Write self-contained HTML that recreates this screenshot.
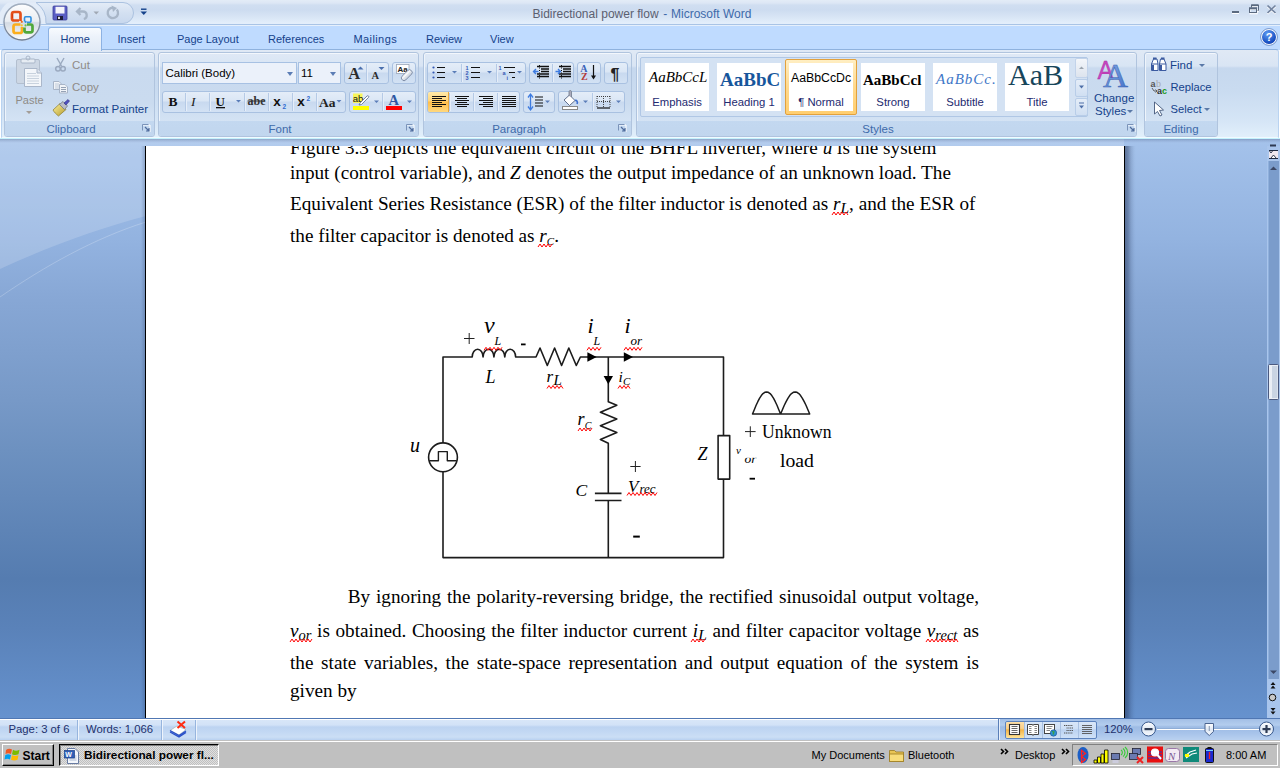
<!DOCTYPE html>
<html><head><meta charset="utf-8">
<style>
*{margin:0;padding:0;box-sizing:border-box}
html,body{width:1280px;height:768px;overflow:hidden;background:#fff}
body{position:relative;font-family:"Liberation Sans",sans-serif;font-size:11px;color:#15428b}
.a{position:absolute}
.t{position:absolute;white-space:pre;line-height:1}
#doc{left:0;top:139px;width:1280px;height:579px;background:linear-gradient(#a3c0e8 0,#6590cb 100%)}
#page{left:145px;top:146px;width:980px;height:572px;background:#fff;border-left:1px solid #000;border-right:1px solid #000;overflow:hidden}
#status{left:0;top:718px;width:1280px;height:22px;background:linear-gradient(#e1ecfa 0,#d3e3f7 9px,#c3d8f2 10px,#cfe1f7 21px);border-top:1px solid #5a84c0}
#taskbar{left:0;top:740px;width:1280px;height:28px;background:#c0c0c0;border-top:1px solid #dfdfdf}
.ln{position:absolute;white-space:nowrap;line-height:19.2px;height:20px;text-align:justify;text-align-last:justify}
.nj{text-align:left;text-align-last:left}
.sb{font-size:15.5px;position:relative;top:3px}
.tab{top:33.5px;font-size:11px;color:#15428b}
.ser{font-family:"Liberation Serif",serif;color:#000;font-size:19.2px}
.i{font-style:italic}
.grp{position:absolute;top:52px;height:85px;border:1px solid #b0c4de;box-shadow:inset 0 1px 0 #f3f7fc,inset 1px 0 0 #eef4fb;border-radius:3px;background:linear-gradient(#dfe9f6 0,#d8e5f4 13px,#c9daef 15px,#cadbef 50px,#d4e3f4 68px);overflow:hidden}
.grp .lab{position:absolute;left:0;right:17px;bottom:0;height:16px;background:transparent;text-align:center;color:#3e6aaa;font-size:11.5px;line-height:18.5px}
.grp:before{content:"";position:absolute;left:0;right:0;bottom:0;height:15px;background:linear-gradient(#c3d8f0,#c1d6ee)}
.dl{position:absolute;width:8px;height:8px}
.btg{position:absolute;border:1px solid #a9c1e1;border-radius:3px;background:linear-gradient(#e4edf8 0,#dae6f5 45%,#c8d9ef 50%,#d3e2f4 100%)}
.sep{position:absolute;top:1px;bottom:1px;width:1px;background:#b5cae6;box-shadow:1px 0 0 #e6eef9}
.combo{position:absolute;border:1px solid #a7c1e3;background:#ebf1fa}
.rt{position:absolute;white-space:pre;line-height:1;font-size:11px;color:#15428b}
.gr{color:#8f8b87}
.arr{position:absolute;width:0;height:0;border-left:3px solid transparent;border-right:3px solid transparent;border-top:3px solid #5a79a8}
.tile{position:absolute;top:63px;width:64px;height:48px;background:#fff;text-align:center;overflow:hidden}
.tile .nm{position:absolute;left:0;right:0;top:33.5px;font-size:11.3px;color:#242a70;line-height:1;white-space:pre}
.tile .pv{position:absolute;left:2px;top:8px;white-space:pre;line-height:1}
</style></head><body>
<div class="a" style="left:0;top:0;width:1280px;height:25px;background:linear-gradient(#e3ecf7 0,#dde7f5 3px,#d0def1 5px,#cddcf0 10px,#d8e5f5 17px,#e3eefb 23px)"></div>
<div class="a" style="left:0;top:24px;width:1280px;height:1px;background:#a9c4e6"></div>
<div class="a" style="left:0;top:25px;width:1280px;height:1px;background:#e6f0fc"></div>
<div class="a" style="left:0;top:26px;width:1280px;height:24px;background:#bfdbff"></div>
<div class="a" style="left:1px;top:49px;width:1278px;height:90px;border:1px solid #b9d3f1;border-top-color:#8fb2de;border-radius:3px;background:linear-gradient(#e0e9f5 0,#d9e5f4 16px,#c6d8ee 18px,#c9dbf0 40px,#d5e5f6 70px,#e2f0fb 88px)"></div>
<div class="a" style="left:2px;top:137px;width:1276px;height:1px;background:#f2faff"></div><div class="a" style="left:0;top:138px;width:1280px;height:1px;background:#c4f2fc"></div>
<div class="a" style="left:48px;top:27px;width:54px;height:24px;border:1px solid #8db2e3;border-bottom:none;border-radius:3px 3px 0 0;background:linear-gradient(#f8fbfe,#ecf2fa 40%,#e1eaf6)"></div>
<div class="t tab" style="left:60.5px">Home</div>
<div class="t tab" style="left:117.5px">Insert</div>
<div class="t tab" style="left:177px">Page Layout</div>
<div class="t tab" style="left:268px">References</div>
<div class="t tab" style="left:353.5px;letter-spacing:0.4px">Mailings</div>
<div class="t tab" style="left:426px">Review</div>
<div class="t tab" style="left:490px">View</div>

<svg class="a" style="left:0;top:0" width="160" height="48" viewBox="0 0 160 48">
<defs>
<linearGradient id="obt" x1="0" y1="0" x2="0" y2="1"><stop offset="0" stop-color="#fdfdfe"/><stop offset="0.48" stop-color="#e9edf2"/><stop offset="0.52" stop-color="#d3dae3"/><stop offset="1" stop-color="#fbfcfd"/></linearGradient>
<linearGradient id="obb" x1="0" y1="0" x2="0" y2="1"><stop offset="0" stop-color="#a3afbf"/><stop offset="1" stop-color="#6f7d92"/></linearGradient>
</defs>
<linearGradient id="qat" x1="0" y1="0" x2="0" y2="1"><stop offset="0" stop-color="#e4ecf7"/><stop offset="0.5" stop-color="#d3e0f1"/><stop offset="1" stop-color="#c8d8ee"/></linearGradient>
<clipPath id="qband"><rect x="0" y="2.5" width="60" height="21"/></clipPath>
<circle cx="22" cy="22" r="24" fill="#e3ecf8" clip-path="url(#qband)"/>
<path d="M36,2.5 H123 A10.5,10.5 0 0 1 123,23.5 H46 A24,24 0 0 0 36,2.5 Z" fill="url(#qat)" stroke="#abc2e0" stroke-width="1"/>
<circle cx="22" cy="22.5" r="19.5" fill="#c9dcf3" opacity="0.5"/>
<circle cx="22" cy="22" r="18" fill="url(#obt)" stroke="url(#obb)" stroke-width="1.3"/>
<path d="M20.5,21 V14 Q20.5,12 18.5,12 H14 Q12,12 12,14 V18.5 Q12,20.5 14,20.5 H19" fill="none" stroke="#e4501a" stroke-width="2.7"/>
<path d="M12.5,14 V18" stroke="#c8300a" stroke-width="1" opacity="0.6"/>
<path d="M24.5,21.5 V18 Q24.5,16.8 25.7,16.8 H29.8 Q31,16.8 31,18 V21 Q31,22.2 29.8,22.2 H27" fill="none" stroke="#2f8fe0" stroke-width="1.6"/>
<path d="M20.5,24.5 H15.5 Q13.5,24.5 13.5,26.5 V31 Q13.5,33 15.5,33 H20 Q22,33 22,31 V27" fill="none" stroke="#fbae1e" stroke-width="2.7"/>
<path d="M24.5,27.5 V30.5 Q24.5,32.3 26.3,32.3 H30.7 Q32.5,32.3 32.5,30.5 V26.3 Q32.5,24.5 30.7,24.5 H27" fill="none" stroke="#50a83a" stroke-width="2.7"/>
<circle cx="21.8" cy="21.8" r="1.1" fill="#ef6b1a"/>
<circle cx="25.6" cy="21.8" r="1.1" fill="#2f8fe0"/>
<circle cx="21.8" cy="25.4" r="1.1" fill="#fbc52e"/>
<circle cx="25.6" cy="25.4" r="1.1" fill="#6cc04a"/>
<rect x="53" y="6" width="14" height="14" rx="1" fill="#5a5ec4" stroke="#3b3f9a" stroke-width="0.8"/>
<rect x="55.5" y="6.8" width="9" height="6.7" fill="#f4f4fb"/>
<rect x="57" y="16" width="6" height="4" fill="#1e1e3a"/>
<rect x="58" y="16.8" width="2" height="2.2" fill="#ddd"/>
<path d="M80.5,8 L77,11.5 L80.5,15 M77.5,11.5 H83 a3.8,3.8 0 0 1 0.8,7.5" fill="none" stroke="#a8b6c8" stroke-width="2.3"/>
<path d="M93.5,11.5 H99 L96.25,14.5 Z" fill="#a0a8b4"/>
<path d="M116.8,9.5 a5.2,5.2 0 1 1 -3.8,-1.8" fill="none" stroke="#a8b6c8" stroke-width="2.4"/>
<path d="M111.5,5.5 L117,8 L113,12 Z" fill="#a8b6c8"/>
<rect x="141" y="8.5" width="5.5" height="1.4" fill="#15428b"/>
<path d="M140.5,11.5 H147 L143.75,15 Z" fill="#15428b"/>
</svg>
<div class="t" style="left:532.5px;top:8.3px;font-size:12px;color:#5b6070">Bidirectional power flow</div><div class="t" style="left:663.3px;top:8.3px;font-size:12px;color:#3e6aaa">-</div><div class="t" style="left:671px;top:8.3px;font-size:12px;color:#3e6aaa">Microsoft Word</div>
<svg class="a" style="left:1225px;top:0" width="55" height="22" viewBox="1225 0 55 22">
<rect x="1232" y="12" width="7" height="2" fill="#fff"/>
<rect x="1232" y="11" width="7" height="2" fill="#5b6a80"/>
<path d="M1251.5,7 V5.5 H1258 V10.5 H1256.5" fill="none" stroke="#fff" stroke-width="1" transform="translate(0.6,0.8)"/>
<path d="M1251.5,7.5 V5 H1258.5 V10.5 H1256.5" fill="none" stroke="#5b6a80" stroke-width="1"/>
<rect x="1251" y="4.5" width="7.5" height="1.6" fill="#5b6a80"/>
<rect x="1249.5" y="8.5" width="7" height="4.5" fill="none" stroke="#fff" stroke-width="1" transform="translate(0.6,0.8)"/>
<rect x="1249.5" y="8" width="7" height="4.5" fill="none" stroke="#5b6a80" stroke-width="1"/>
<rect x="1249" y="7.5" width="8" height="1.8" fill="#5b6a80"/>
<path d="M1267.5,5.5 L1275.5,13 M1275.5,5.5 L1267.5,13" stroke="#fff" stroke-width="1.8" transform="translate(0,0.9)"/>
<path d="M1267.5,5.5 L1275.5,13 M1275.5,5.5 L1267.5,13" stroke="#7384a0" stroke-width="1.7"/>
</svg>
<svg class="a" style="left:1260px;top:28px" width="18" height="18" viewBox="0 0 18 18">
<defs><radialGradient id="hg" cx="40%" cy="30%" r="70%"><stop offset="0" stop-color="#5e9cf5"/><stop offset="1" stop-color="#0b3fb5"/></radialGradient></defs>
<circle cx="9" cy="9" r="7.6" fill="url(#hg)" stroke="#fff" stroke-width="1.2"/>
<circle cx="9" cy="9" r="8.4" fill="none" stroke="#3d63a8" stroke-width="0.6"/>
<text x="9" y="13.2" font-family="Liberation Sans" font-weight="bold" font-size="11" fill="#fff" text-anchor="middle">?</text>
</svg>

<div class="grp" style="left:4px;width:151px"><div class="lab">Clipboard</div></div>
<div class="grp" style="left:158px;width:261px"><div class="lab">Font</div></div>
<div class="grp" style="left:423px;width:209px"><div class="lab">Paragraph</div></div>
<div class="grp" style="left:636px;width:501px"><div class="lab">Styles</div></div>
<div class="grp" style="left:1144px;width:74px"><div class="lab" style="right:0">Editing</div></div>
<!-- clipboard -->
<div class="rt gr" style="left:15.5px;top:94.5px;font-size:11px">Paste</div>
<div class="arr" style="left:25.5px;top:110.5px;border-top-color:#a39d97"></div>
<div class="rt gr" style="left:72px;top:60px;font-size:11.5px">Cut</div>
<div class="rt gr" style="left:72px;top:82px;font-size:11.5px">Copy</div>
<div class="rt" style="left:72px;top:104px;font-size:11.5px">Format Painter</div>
<!-- font -->
<div class="combo" style="left:162px;top:62px;width:135px;height:22px"></div>
<div class="combo" style="left:298px;top:62px;width:43px;height:22px"></div>
<div class="rt" style="left:165.5px;top:67.5px;color:#000;font-size:11.5px">Calibri (Body)</div>
<div class="rt" style="left:301px;top:67.5px;color:#000;font-size:11.5px">11</div>
<div class="arr" style="left:286.5px;top:72px;border-top-color:#5b7db5;border-width:4px 3.5px 0 3.5px"></div>
<div class="arr" style="left:330px;top:72px;border-top-color:#5b7db5;border-width:4px 3.5px 0 3.5px"></div>
<div class="btg" style="left:344px;top:62px;width:45px;height:22px"><div class="sep" style="left:21px"></div></div>
<div class="btg" style="left:392px;top:62px;width:24px;height:22px"></div>
<div class="btg" style="left:162px;top:91px;width:184px;height:22px"><div class="sep" style="left:22px"></div><div class="sep" style="left:46px"></div><div class="sep" style="left:81px"></div><div class="sep" style="left:105px"></div><div class="sep" style="left:129px"></div><div class="sep" style="left:153px"></div></div>
<div class="btg" style="left:349px;top:91px;width:67px;height:22px"><div class="sep" style="left:32px"></div></div>
<!-- paragraph -->
<div class="btg" style="left:427px;top:62px;width:99px;height:22px"><div class="sep" style="left:33px"></div><div class="sep" style="left:68px"></div></div>
<div class="btg" style="left:529px;top:62px;width:45px;height:22px"><div class="sep" style="left:22px"></div></div>
<div class="btg" style="left:577px;top:62px;width:24px;height:22px"></div>
<div class="btg" style="left:604px;top:62px;width:24px;height:22px"></div>
<div class="btg" style="left:427px;top:91px;width:93px;height:22px"><div class="sep" style="left:21px"></div><div class="sep" style="left:45px"></div><div class="sep" style="left:69px"></div></div>
<div class="a" style="left:428px;top:92px;width:21px;height:20px;border-radius:2px 0 0 2px;background:linear-gradient(#ffe9a8 0,#ffd57c 45%,#ffbd4a 50%,#ffd87e 100%);border-right:1px solid #e8a63c"></div>
<div class="btg" style="left:523px;top:91px;width:32px;height:22px"></div>
<div class="btg" style="left:558px;top:91px;width:67px;height:22px"><div class="sep" style="left:33px"></div></div>
<!-- styles -->
<div class="a" style="left:640px;top:57px;width:448px;height:60px;border:1px solid #b0c7e5;border-radius:2px;background:#d4e2f3"></div>
<div class="tile" style="left:645px"><div class="pv" style="font-family:'Liberation Serif';font-style:italic;font-size:15px;color:#000;left:4px;top:7px">AaBbCcL</div><div class="nm">Emphasis</div></div>
<div class="tile" style="left:717px"><div class="pv" style="font-family:'Liberation Serif';font-weight:bold;font-size:19px;color:#17569c;left:3px;top:7px">AaBbC</div><div class="nm">Heading 1</div></div>
<div class="a" style="left:785px;top:59px;width:72px;height:56px;border:1px solid #e2a13d;border-radius:2px;background:linear-gradient(#ffeec2,#ffd98e 50%,#ffce6f)"></div>
<div class="tile" style="left:789px;top:63px"><div class="pv" style="font-size:12.3px;color:#000;left:2px;top:8.5px">AaBbCcDc</div><div class="nm">¶ Normal</div></div>
<div class="tile" style="left:861px"><div class="pv" style="font-family:'Liberation Serif';font-weight:bold;font-size:15px;color:#000;left:2px;top:9.5px">AaBbCcl</div><div class="nm">Strong</div></div>
<div class="tile" style="left:933px"><div class="pv" style="font-family:'Liberation Serif';font-style:italic;font-size:15px;color:#3f78c8;left:3px;top:9px;letter-spacing:1px">AaBbCc.</div><div class="nm">Subtitle</div></div>
<div class="tile" style="left:1005px"><div class="pv" style="font-family:'Liberation Serif';font-size:30px;color:#17455a;left:3px;top:-3px">AaB</div><div class="nm">Title</div></div>
<div class="a" style="left:1075px;top:58px;width:13px;height:20px;border:1px solid #c2d3ea;border-radius:2px;background:linear-gradient(#f3f6fa,#dde4ee)"></div>
<div class="a" style="left:1075px;top:79px;width:13px;height:18px;border:1px solid #b8cde8;border-radius:2px;background:linear-gradient(#e4edf8,#d0dff2)"></div>
<div class="a" style="left:1075px;top:98px;width:13px;height:18px;border:1px solid #b8cde8;border-radius:2px;background:linear-gradient(#e4edf8,#d0dff2)"></div>
<div class="rt" style="left:1094px;top:93px;font-size:11.5px">Change</div>
<div class="rt" style="left:1095px;top:106px;font-size:11.5px">Styles</div>
<div class="arr" style="left:1127px;top:110px"></div>
<!-- editing -->
<div class="rt" style="left:1170px;top:60px;font-size:11.5px">Find</div>
<div class="arr" style="left:1199px;top:64px"></div>
<div class="rt" style="left:1170.5px;top:82px;font-size:11.2px">Replace</div>
<div class="rt" style="left:1170.5px;top:103.5px;font-size:11.2px">Select</div>
<div class="arr" style="left:1204px;top:108px"></div>

<svg class="a" style="left:0;top:48px" width="1280" height="92" viewBox="0 48 1280 92">
<defs>
<linearGradient id="brush" x1="0" y1="0" x2="1" y2="1"><stop offset="0" stop-color="#fff3a0"/><stop offset="1" stop-color="#b39a2a"/></linearGradient>
<linearGradient id="eras" x1="0" y1="0" x2="0" y2="1"><stop offset="0" stop-color="#ffffff"/><stop offset="1" stop-color="#c8d0dc"/></linearGradient>
<linearGradient id="csA" x1="0" y1="0" x2="1" y2="1"><stop offset="0" stop-color="#8fb3ea"/><stop offset="1" stop-color="#3d6dc8"/></linearGradient>
<linearGradient id="tgl" x1="0" y1="0" x2="0" y2="1"><stop offset="0" stop-color="#f9fbfd"/><stop offset="1" stop-color="#dde5ef"/></linearGradient>
<g id="dl"><path d="M0.5,0.5 H7.5 V7.5" fill="none" stroke="#fff" stroke-width="1"/><path d="M0,0 H6 M0,0 V6" stroke="#7a93b9" stroke-width="1" fill="none"/><path d="M2.5,2.5 L6.5,6.5 M6.5,3.5 V6.5 H3.5" stroke="#4e6b9c" stroke-width="1.2" fill="none"/></g>
</defs>
<!-- dialog launchers -->
<use href="#dl" x="142.5" y="124.5"/>
<use href="#dl" x="406.5" y="124.5"/>
<use href="#dl" x="618.5" y="124.5"/>
<use href="#dl" x="1127.5" y="124.5"/>
<!-- paste -->
<rect x="16.5" y="59.5" width="23" height="24" rx="1.5" fill="#cdd7e4" stroke="#b3bfcf"/>
<rect x="21" y="59" width="14" height="4" rx="1" fill="#e6ecf3" stroke="#a9b6c8"/>
<circle cx="28" cy="58" r="2" fill="none" stroke="#a9b6c8"/>
<path d="M24.5,68.5 H37 L41.5,73 V86.5 H24.5 Z" fill="#f3f6fa" stroke="#aab7ca"/>
<path d="M37,68.5 V73 H41.5" fill="#dbe2ec" stroke="#aab7ca"/>
<path d="M27,73.5 H36 M27,76 H39 M27,78.5 H39 M27,81 H39 M27,83.5 H39" stroke="#c8d2de" stroke-width="1"/>
<!-- scissors -->
<path d="M57,58 L61.5,66 M64,58 L59.5,66" stroke="#9aa9bf" stroke-width="1.4"/>
<circle cx="58" cy="68.7" r="2.3" fill="none" stroke="#9aa9bf" stroke-width="1.5"/>
<circle cx="63" cy="68.7" r="2.3" fill="none" stroke="#9aa9bf" stroke-width="1.5"/>
<!-- copy -->
<path d="M53.5,81.5 H59 L61.5,84 V89.5 H53.5 Z" fill="#f1f4f8" stroke="#a8b5c8"/>
<path d="M55,84 H59 M55,86 H60 M55,88 H60" stroke="#b5c0cf" stroke-width="0.8"/>
<path d="M59.5,84.5 H65 L67.5,87 V93 H59.5 Z" fill="#f1f4f8" stroke="#a8b5c8"/>
<path d="M61,87.5 H66 M61,89.5 H66 M61,91.5 H66" stroke="#8a98ad" stroke-width="0.9"/>
<!-- format painter -->
<path d="M53,110 L60,103.5 L66,109.5 L58.5,116 C56,114 54,112 53,110 Z" fill="url(#brush)" stroke="#8a7a2a" stroke-width="0.7"/>
<path d="M59.5,104.5 L63,101.5 L67.5,106 L64.5,109.5 Z" fill="#b9bcc6" stroke="#666d80" stroke-width="0.7"/>
<path d="M64,103 L68,99.5 L69.5,101 L66,105 Z" fill="#5050c0" stroke="#30307a" stroke-width="0.6"/>
<!-- grow/shrink -->
<text x="348.3" y="79.3" font-family="Liberation Serif" font-weight="bold" font-size="16.5" fill="#2b2b2b">A</text>
<path d="M357.5,69.5 H363.5 L360.5,66.5 Z" fill="#4a6fad"/>
<text x="371.5" y="79" font-family="Liberation Serif" font-weight="bold" font-size="10.5" fill="#2b2b2b">A</text>
<path d="M378.5,67 H384.5 L381.5,70 Z" fill="#4a6fad"/>
<!-- clear formatting -->
<rect x="396.5" y="64.5" width="12.5" height="9" fill="#fff" stroke="#9aa6b8" stroke-width="0.8"/>
<text x="397.5" y="72.3" font-family="Liberation Sans" font-weight="bold" font-size="8" fill="#222">Aa</text>
<rect x="-6.5" y="-2.6" width="13" height="5.2" rx="2.4" transform="translate(406.8,75.2) rotate(-45)" fill="url(#eras)" stroke="#6f809c" stroke-width="0.8"/><path d="M403.5,77.5 L409.5,71.5" stroke="#fff" stroke-width="0.8" opacity="0.8"/>
<!-- B I U -->
<text x="168.5" y="106" font-family="Liberation Serif" font-weight="bold" font-size="13.5" fill="#111">B</text>
<text x="191" y="106" font-family="Liberation Serif" font-style="italic" font-size="13.5" fill="#222">I</text>
<text x="215.5" y="105.5" font-family="Liberation Serif" font-weight="bold" font-size="13" fill="#111">U</text>
<rect x="216" y="107" width="9" height="1.3" fill="#111"/>
<path d="M236,100 H241 L238.5,102.5 Z" fill="#5a7db8"/>
<text x="247.5" y="105" font-family="Liberation Serif" font-weight="bold" font-size="12" fill="#333">abe</text>
<rect x="247.5" y="100.5" width="17" height="1" fill="#333"/>
<text x="273.3" y="106.3" font-family="Liberation Sans" font-weight="bold" font-size="13.5" fill="#111">x</text>
<text x="282.5" y="108.5" font-family="Liberation Sans" font-weight="bold" font-size="6.5" fill="#2f6ad0">2</text>
<text x="297.3" y="106.3" font-family="Liberation Sans" font-weight="bold" font-size="13.5" fill="#111">x</text>
<text x="306.5" y="100.5" font-family="Liberation Sans" font-weight="bold" font-size="6.5" fill="#2f6ad0">2</text>
<text x="319" y="107" font-family="Liberation Serif" font-weight="bold" font-size="13.5" fill="#222">Aa</text>
<path d="M336.5,100 H341.5 L339,102.5 Z" fill="#5a7db8"/>
<!-- highlight -->
<rect x="353" y="93.5" width="9.5" height="9.5" fill="#f8f55a"/>
<text x="352.8" y="101.8" font-family="Liberation Sans" font-size="9.5" fill="#111">ab</text>
<path d="M360,103 L367,96 C368,95 369.5,96.5 368.5,97.5 L361.5,104.5 L359,105 Z" fill="#fff" stroke="#556a8c" stroke-width="0.8"/>
<rect x="353" y="106" width="16" height="4" fill="#ffff00"/>
<path d="M374,100.5 H379 L376.5,103 Z" fill="#5a7db8"/>
<!-- font color -->
<text x="388.5" y="105" font-family="Liberation Serif" font-weight="bold" font-size="14.5" fill="#2e57a2">A</text>
<rect x="386" y="106" width="16" height="4" fill="#ff0000"/>
<path d="M407,100.5 H412 L409.5,103 Z" fill="#5a7db8"/>
<!-- bullets -->
<g fill="#3559b5"><circle cx="433.5" cy="67.5" r="1.1"/><circle cx="433.5" cy="72.5" r="1.1"/><circle cx="433.5" cy="77.5" r="1.1"/></g>
<path d="M437,67.5 H445 M437,72.5 H445 M437,77.5 H445" stroke="#111" stroke-width="1.1"/>
<path d="M452,71 H457 L454.5,73.5 Z" fill="#5a7db8"/>
<g font-family="Liberation Sans" font-weight="bold" font-size="5.5" fill="#3559b5"><text x="465.5" y="69.5">1</text><text x="465.5" y="74.5">2</text><text x="465.5" y="79.5">3</text></g>
<path d="M471,67.5 H480 M471,72.5 H480 M471,77.5 H480" stroke="#111" stroke-width="1.1"/>
<path d="M487,71 H492 L489.5,73.5 Z" fill="#5a7db8"/>
<g font-family="Liberation Sans" font-weight="bold" font-size="5.5" fill="#3559b5"><text x="498.5" y="69.5">1</text><text x="502.5" y="74.5">a</text><text x="506.5" y="79.5">i</text></g>
<path d="M504,67.5 H515 M509,72.5 H515 M512,77.5 H515" stroke="#111" stroke-width="1.1"/>
<path d="M517,71 H522 L519.5,73.5 Z" fill="#5a7db8"/>
<!-- indent -->
<path d="M537,66.5 H549 M541,69 H549 M541,71.5 H549 M537,74 H549 M537,76.5 H549" stroke="#111" stroke-width="1.3"/>
<path d="M539.5,65 V79" stroke="#111" stroke-width="1" stroke-dasharray="1,1.5"/>
<path d="M538.5,71.5 H533.5 M536,69 L533.5,71.5 L536,74" stroke="#3d7be0" stroke-width="1.4" fill="none"/>
<path d="M559,66.5 H571 M563,69 H571 M563,71.5 H571 M559,74 H571 M559,76.5 H571" stroke="#111" stroke-width="1.3"/>
<path d="M561.5,65 V79" stroke="#111" stroke-width="1" stroke-dasharray="1,1.5"/>
<path d="M555.5,71.5 H560.5 M558,69 L560.5,71.5 L558,74" stroke="#3d7be0" stroke-width="1.4" fill="none"/>
<!-- sort -->
<text x="580.3" y="71.5" font-family="Liberation Serif" font-weight="bold" font-size="10" fill="#3a63b8">A</text>
<text x="581" y="79.8" font-family="Liberation Serif" font-weight="bold" font-size="10" fill="#b33a3a">Z</text>
<path d="M593.5,65 V78" stroke="#111" stroke-width="1.2"/>
<path d="M591,75.5 L593.5,79.5 L596,75.5 Z" fill="#111"/>
<!-- pilcrow -->
<text x="610.5" y="80" font-family="Liberation Sans" font-weight="bold" font-size="16" fill="#222">¶</text>
<!-- align -->
<path d="M432,96.5 H446 M432,98.5 H442 M432,100.5 H446 M432,102.5 H442 M432,104.5 H446 M432,106.5 H442" stroke="#111" stroke-width="1.1"/>
<path d="M455,96.5 H469 M457,98.5 H467 M455,100.5 H469 M457,102.5 H467 M455,104.5 H469 M457,106.5 H467" stroke="#111" stroke-width="1.1"/>
<path d="M479,96.5 H493 M483,98.5 H493 M479,100.5 H493 M483,102.5 H493 M479,104.5 H493 M483,106.5 H493" stroke="#111" stroke-width="1.1"/>
<path d="M502,96.5 H516 M502,98.5 H516 M502,100.5 H516 M502,102.5 H516 M502,104.5 H516 M502,106.5 H516" stroke="#111" stroke-width="1.1"/>
<!-- line spacing -->
<path d="M530.5,95 V109" stroke="#3d7be0" stroke-width="1.3"/>
<path d="M528,97.5 L530.5,94 L533,97.5 M528,106.5 L530.5,110 L533,106.5" stroke="#3d7be0" stroke-width="1.3" fill="none"/>
<path d="M535,97 H543 M535,100 H543 M535,103 H543 M535,106 H543" stroke="#111" stroke-width="1.2"/>
<path d="M545,100.5 H550 L547.5,103 Z" fill="#5a7db8"/>
<!-- shading -->
<path d="M564,100 L569.5,95 L575,100.5 L569.5,105.5 Z" fill="#fff" stroke="#506080" stroke-width="0.9"/>
<path d="M569,96 V91.5 A1.3,1.3 0 0 1 571.5,91.5 V97" stroke="#6f7a8c" stroke-width="0.8" fill="#aab"/>
<path d="M575,100.5 C577,100 578,102 577,104" stroke="#3d6fd0" stroke-width="1.6" fill="none"/>
<rect x="562.5" y="106.5" width="15" height="3" fill="#fff" stroke="#888"/>
<path d="M583,100.5 H588 L585.5,103 Z" fill="#5a7db8"/>
<!-- borders -->
<path d="M597,96.5 H610 M597,101.5 H610 M597,96 V107 M603.5,96 V107 M610,96 V107" stroke="#333" stroke-width="0.9" stroke-dasharray="1,1"/>
<path d="M597,108 H610" stroke="#111" stroke-width="1.2"/>
<path d="M616,100.5 H621 L618.5,103 Z" fill="#5a7db8"/>
<!-- styles scroll -->
<path d="M1079,69 H1084 L1081.5,66.5 Z" fill="#9aa3ad"/>
<path d="M1079,85.5 H1084 L1081.5,88.5 Z" fill="#4e6fa8"/>
<rect x="1079" y="102.5" width="5" height="1" fill="#4e6fa8"/>
<path d="M1079,105.5 H1084 L1081.5,108.5 Z" fill="#4e6fa8"/>
<!-- change styles -->
<text x="1097.5" y="78.5" font-family="Liberation Sans" font-size="26" fill="#c846c0" stroke="#9a2a9a" stroke-width="0.3" textLength="16" lengthAdjust="spacingAndGlyphs">A</text>
<text x="1103" y="86.5" font-family="Liberation Serif" font-size="34" fill="url(#csA)" stroke="#3b62b0" stroke-width="0.5" textLength="25" lengthAdjust="spacingAndGlyphs">A</text>
<!-- binoculars -->
<path d="M1151.5,70.5 V64 L1153.5,59 H1157 L1158,64 V70.5 Z" fill="#fff" stroke="#3b5aa0"/>
<path d="M1159.5,70.5 V64 L1160.5,59 H1164 L1166,64 V70.5 Z" fill="#fff" stroke="#3b5aa0"/>
<path d="M1151.5,64 H1158 M1159.5,64 H1166" stroke="#3b5aa0"/>
<rect x="1152" y="65" width="2" height="5" fill="#3b5aa0"/><rect x="1160" y="65" width="2" height="5" fill="#3b5aa0"/>
<rect x="1153" y="57.5" width="3.5" height="2" fill="#3b5aa0"/><rect x="1161" y="57.5" width="3.5" height="2" fill="#3b5aa0"/>
<!-- replace -->
<text x="1150.5" y="86.5" font-family="Liberation Sans" font-weight="bold" font-size="9" fill="#555">a</text>
<text x="1156" y="86.5" font-family="Liberation Serif" font-size="10" fill="#aaa">b</text>
<path d="M1152,88 L1154,91 H1157 M1155.5,89.5 L1157,91 L1155.5,92.5" stroke="#555" stroke-width="0.9" fill="none"/>
<text x="1157" y="93.5" font-family="Liberation Sans" font-weight="bold" font-size="9" fill="#333">a</text>
<text x="1162" y="93.5" font-family="Liberation Sans" font-weight="bold" font-size="9" fill="#1a9a1a">c</text>
<!-- cursor -->
<path d="M1154.5,102 V114 L1157.5,111.5 L1160,116 L1162,115 L1159.5,110.5 L1163.5,110 Z" fill="#fff" stroke="#44587a" stroke-width="0.9"/>
</svg>

<div class="a" style="left:0;top:139px;width:1280px;height:579px;background:linear-gradient(#a6c3eb 0,#a3c1ea 7px,#93b3e0 100px,#87a7d5 161px,#7799c7 261px,#6d91c0 311px,#557cb0 440px,#5a82b9 490px,#6692ce 579px)"></div>
<svg class="a" style="left:0;top:139px" width="1125" height="200" viewBox="0 139 1125 200">
<path d="M0,139 H1124 V146 H146 V216 C100,228 50,246 0,269 Z" fill="#fff" opacity="0.17"/>
<path d="M0,297 C45,266 95,238 146,222" fill="none" stroke="#fff" stroke-width="1" opacity="0.22"/>
</svg>
<div class="a" style="left:141px;top:146px;width:4px;height:572px;background:linear-gradient(90deg,rgba(40,60,100,0),rgba(40,60,100,0.25))"></div>
<div class="a" style="left:1125px;top:146px;width:11px;height:572px;background:linear-gradient(90deg,rgba(25,40,75,0.5) 0,rgba(25,40,75,0.38) 3px,rgba(25,40,75,0.15) 6px,rgba(25,40,75,0.03) 9px,rgba(25,40,75,0) 11px)"></div>

<div id="page" class="a"></div>
<div class="a ser" style="left:290px;top:137px;width:647px;height:40px;clip-path:inset(9px 0 0 0)"><div class="ln" style="top:1.4px;width:646.4px">Figure 3.3 depicts the equivalent circuit of the BHFL inverter, where <i>u</i> is the system</div></div>
<div class="ln ser" style="left:290px;top:163.4px;width:660.2px">input (control variable), and <i>Z</i> denotes the output impedance of an unknown load. The</div>
<div class="ln ser" style="left:290px;top:194.4px;width:685px">Equivalent Series Resistance (ESR) of the filter inductor is denoted as <i>r<span class="sb">L</span></i>, and the ESR of</div>
<div class="ln ser nj" style="left:290px;top:226px">the filter capacitor is denoted as <i>r<span class="sb" style="font-size:11px">C</span></i>.</div>
<div class="ln ser" style="left:347.7px;top:587.4px;width:631.3px">By ignoring the polarity-reversing bridge, the rectified sinusoidal output voltage,</div>
<div class="ln ser" style="left:290px;top:621.4px;width:689px"><i>v<span class="sb" style="font-size:14.5px">or</span></i> is obtained. Choosing the filter inductor current <i>i<span class="sb">L</span></i> and filter capacitor voltage <i>v<span class="sb" style="font-size:14.5px">rect</span></i> as</div>
<div class="ln ser" style="left:290px;top:653.4px;width:689px">the state variables, the state-space representation and output equation of the system is</div>
<div class="ln ser nj" style="left:290px;top:681.4px">given by</div>

<svg class="a" style="left:0;top:0" width="1280" height="768" viewBox="0 0 1280 768">
<g fill="none" stroke="#1c1c1c" stroke-width="1.6" stroke-linejoin="round">
<path d="M443,443 V357 H472.2 a5.43,7.8 0 0 1 10.86,0 a5.43,7.8 0 0 1 10.86,0 a5.43,7.8 0 0 1 10.86,0 a5.43,7.8 0 0 1 10.86,0 H536 L540,348 L547.3,365.5 L554.6,348 L561.6,365.5 L568.8,348 L576.3,365.5 L580.4,357 H723.5 V557.6 H443 V471.7"/>
<circle cx="443" cy="457.3" r="14.4"/>
<path d="M429.3,460.8 H438.4 V451.6 H447.3 V460.8 H456.7" stroke-width="1.4"/>
<path d="M608.3,357 V401.7 L616.8,405.2 L600.4,412.3 L616.8,419 L600.4,425.8 L616.8,432.6 L600.4,439.5 L608.3,443.3 V493.4 M608.3,500.5 V557.6"/>
<path d="M594.9,493.4 H621.5 M594.9,500.5 H621.5"/>
<rect x="718.1" y="435.6" width="11.6" height="43.5" fill="#fff"/>
<path d="M752.5,414.0 L754.3,409.7 L756.0,405.5 L757.8,401.7 L759.5,398.4 L761.3,395.6 L763.0,393.6 L764.8,392.3 L766.5,391.9 L768.3,392.3 L770.1,393.6 L771.8,395.6 L773.6,398.4 L775.3,401.7 L777.1,405.5 L778.8,409.7 L780.6,414.0 L782.4,409.7 L784.2,405.5 L786.1,401.7 L787.9,398.4 L789.7,395.6 L791.5,393.6 L793.3,392.3 L795.2,391.9 L797.0,392.3 L798.8,393.6 L800.6,395.6 L802.4,398.4 L804.2,401.7 L806.1,405.5 L807.9,409.7 L809.7,414.0 Z" stroke-width="1.5"/>
</g>
<g fill="#000">
<path d="M587.4,352.3 L596.6,357 L587.4,361.7 Z"/>
<path d="M623.8,352.3 L633,357 L623.8,361.7 Z"/>
<path d="M603.6,376 L613,376 L608.3,384.2 Z"/>
<rect x="521" y="343.5" width="4.6" height="1.8"/>
<rect x="633.2" y="535.6" width="6.6" height="2"/>
<rect x="749.6" y="477.8" width="5.4" height="1.8"/>
</g>
<g stroke="#222" stroke-width="1">
<path d="M464,338.5 H474.5 M469.2,333 V344"/>
<path d="M630.3,466.5 H640.6 M635.4,461 V472"/>
<path d="M745,431.6 H755.6 M750.3,426.3 V437"/>
</g>
<g font-family="Liberation Serif" font-style="italic" fill="#000">
<text x="484" y="332.8" font-size="24">v</text>
<text x="494.5" y="344.6" font-size="12">L</text>
<text x="485.5" y="383.4" font-size="18">L</text>
<text x="587.5" y="332.8" font-size="22">i</text>
<text x="593.5" y="344.6" font-size="12">L</text>
<text x="624.5" y="332.8" font-size="22">i</text>
<text x="630.5" y="344.6" font-size="13">or</text>
<text x="546.5" y="382" font-size="17">r</text>
<text x="553.5" y="385" font-size="15">L</text>
<text x="618.5" y="382" font-size="15.5">i</text>
<text x="623" y="385" font-size="11">C</text>
<text x="577.5" y="425.2" font-size="18">r</text>
<text x="584.8" y="428.7" font-size="10">C</text>
<text x="575.5" y="495.5" font-size="17.5">C</text>
<text x="628" y="491.7" font-size="17">V</text>
<text x="639.5" y="493.4" font-size="13">rec</text>
<text x="410" y="452" font-size="20">u</text>
<text x="697.5" y="460" font-size="18">Z</text>
<text x="736" y="454.4" font-size="11">v</text>
<text x="744.5" y="463" font-size="13.5">or</text>
<rect x="744" y="454" width="16" height="3.8" fill="#fff"/>
</g>
<g font-family="Liberation Serif" fill="#000" font-size="19.2">
<text x="762" y="437.5" textLength="69.5" lengthAdjust="spacingAndGlyphs">Unknown</text>
<text x="780" y="466.5" textLength="34" lengthAdjust="spacingAndGlyphs">load</text>
</g>
<g fill="none" stroke="#f00" stroke-width="1">
<path d="M484.0,350.3 L486.0,347.3 L488.0,350.3 L490.0,347.3 L492.0,350.3 L494.0,347.3 L496.0,350.3 L498.0,347.3 L500.0,350.3 L502.0,347.3"/><path d="M587.0,350.3 L589.0,347.3 L591.0,350.3 L593.0,347.3 L595.0,350.3 L597.0,347.3 L599.0,350.3 L601.0,347.3"/><path d="M624.0,350.3 L626.0,347.3 L628.0,350.3 L630.0,347.3 L632.0,350.3 L634.0,347.3 L636.0,350.3 L638.0,347.3 L640.0,350.3 L642.0,347.3"/><path d="M547.0,388.5 L549.0,385.5 L551.0,388.5 L553.0,385.5 L555.0,388.5 L557.0,385.5 L559.0,388.5 L561.0,385.5 L563.0,388.5"/><path d="M618.0,388.5 L620.0,385.5 L622.0,388.5 L624.0,385.5 L626.0,388.5 L628.0,385.5 L630.0,388.5"/><path d="M578.0,431.0 L580.0,428.0 L582.0,431.0 L584.0,428.0 L586.0,431.0 L588.0,428.0 L590.0,431.0 L592.0,428.0"/><path d="M627.0,495.5 L629.0,492.5 L631.0,495.5 L633.0,492.5 L635.0,495.5 L637.0,492.5 L639.0,495.5 L641.0,492.5 L643.0,495.5 L645.0,492.5 L647.0,495.5 L649.0,492.5 L651.0,495.5 L653.0,492.5 L655.0,495.5 L657.0,492.5"/><path d="M832.0,215.0 L834.0,212.0 L836.0,215.0 L838.0,212.0 L840.0,215.0 L842.0,212.0 L844.0,215.0 L846.0,212.0 L848.0,215.0"/><path d="M290.0,642.0 L292.0,639.0 L294.0,642.0 L296.0,639.0 L298.0,642.0 L300.0,639.0 L302.0,642.0 L304.0,639.0 L306.0,642.0 L308.0,639.0 L310.0,642.0 L312.0,639.0"/><path d="M538.0,247.0 L540.0,244.0 L542.0,247.0 L544.0,244.0 L546.0,247.0 L548.0,244.0 L550.0,247.0 L552.0,244.0"/><path d="M691.0,642.0 L693.0,639.0 L695.0,642.0 L697.0,639.0 L699.0,642.0 L701.0,639.0 L703.0,642.0 L705.0,639.0"/><path d="M926.0,642.0 L928.0,639.0 L930.0,642.0 L932.0,639.0 L934.0,642.0 L936.0,639.0 L938.0,642.0 L940.0,639.0 L942.0,642.0 L944.0,639.0 L946.0,642.0 L948.0,639.0 L950.0,642.0 L952.0,639.0 L954.0,642.0 L956.0,639.0 L958.0,642.0"/>
</g>
</svg>

<div class="a" style="left:0;top:139px;width:1280px;height:4px;background:linear-gradient(rgba(60,80,120,0.32) 0,rgba(60,80,120,0.16) 1.5px,rgba(60,80,120,0.05) 3px,rgba(60,80,120,0) 4px)"></div>
<!-- scrollbar -->
<div class="a" style="left:1267px;top:146px;width:13px;height:572px;background:#a9c5ec"></div>
<div class="a" style="left:1268px;top:161px;width:11px;height:518px;background:#7b9ccb;border-left:1px solid #8fb0dc"></div>
<svg class="a" style="left:1264px;top:139px" width="16" height="579" viewBox="1264 139 16 579">
<rect x="1270" y="144.5" width="6" height="2" fill="#2f3a52"/>
<rect x="1269" y="150.5" width="9" height="8" fill="#f0e8ee"/>
<path d="M1269,150.5 H1278 M1269,158.5 H1278" stroke="#1e2a40" stroke-width="1"/>
<path d="M1269.5,151 L1271,153 L1272.5,151" stroke="#1e2a40" fill="none" stroke-width="0.9"/>
<path d="M1271,158 L1273.5,155 L1276,158" stroke="#1e2a40" fill="#fff" stroke-width="0.9"/>
<path d="M1270,170 H1277 L1273.5,166.5 Z" fill="#3c4866"/>
<rect x="1268.5" y="364.5" width="10" height="35" rx="1" fill="#e9eef5" stroke="#4b5a80" stroke-width="1"/>
<rect x="1272" y="366" width="5.5" height="32" fill="#c9d4e3"/>
<path d="M1270,670.5 H1277 L1273.5,674 Z" fill="#3c4866"/>
<path d="M1270.5,685 L1273,682 L1275.5,685 Z M1270.5,688.5 L1273,685.5 L1275.5,688.5 Z" fill="#111"/>
<circle cx="1272.5" cy="697.5" r="3.3" fill="#c8c8c8" stroke="#111" stroke-width="1"/>
<path d="M1270.5,708 L1273,711 L1275.5,708 Z M1270.5,711.5 L1273,714.5 L1275.5,711.5 Z" fill="#111"/>
</svg>

<div class="a" style="left:0;top:718px;width:1280px;height:22px;background:#5077b3"></div>
<div class="a" style="left:0;top:719px;width:1280px;height:21px;background:#fff"></div>
<div class="a" style="left:0;top:720px;width:998px;height:20px;background:linear-gradient(#d8e6f8 0,#d2e2f7 5px,#bcd3f1 7px,#c3d8f3 12px,#cbdef5 17px,#b9d1f0 20px)"></div>
<div class="a" style="left:998px;top:719px;width:282px;height:21px;background:linear-gradient(#a3bfe6 0,#b3cdee 6px,#9dbbe4 8px,#a7c3ea 14px,#b9d1f0 21px);border-left:1px solid #5a7fb8;box-shadow:inset 1px 0 0 #e8f0fb"></div>
<div class="a" style="left:77px;top:720px;width:1px;height:20px;background:#97b5de;box-shadow:1px 0 0 #eef4fc"></div>
<div class="a" style="left:161px;top:720px;width:1px;height:20px;background:#97b5de;box-shadow:1px 0 0 #eef4fc"></div>
<div class="a" style="left:195px;top:720px;width:1px;height:20px;background:#97b5de;box-shadow:1px 0 0 #eef4fc"></div>
<div class="rt" style="left:8.5px;top:723.5px;font-size:11.3px;color:#22306c">Page: 3 of 6</div>
<div class="rt" style="left:86px;top:723.5px;font-size:11.3px;color:#22306c">Words: 1,066</div>
<svg class="a" style="left:168px;top:719px" width="22" height="20" viewBox="168 719 22 20">
<path d="M170,730.5 L177,726 L186,729.5 L179,735 Z" fill="#fff" stroke="#9aa" stroke-width="0.6"/>
<path d="M170,730.5 L179,735.5 L186,731 M170,732 L179,737 L186,732.5" fill="none" stroke="#2a50c8" stroke-width="1.2"/>
<path d="M177.5,721.5 L185,728 M185,721.5 L177.5,728" stroke="#ff2a10" stroke-width="2"/>
</svg>
<div class="a" style="left:1004.5px;top:720.5px;width:92px;height:18px;border:1px solid #5b82bd;border-radius:2px;background:linear-gradient(#d8e6f8 0,#cfe0f6 40%,#bcd3f1 50%,#cfe1f7 100%)"></div>
<div class="a" style="left:1005.5px;top:721.5px;width:18px;height:16px;border-radius:2px 0 0 2px;background:linear-gradient(#fde0a8 0,#fbd08a 40%,#f4b548 50%,#ffe498 100%)"></div>
<div class="a" style="left:1023.5px;top:721.5px;width:1px;height:16px;background:#a9c1e2"></div>
<div class="a" style="left:1041.5px;top:721.5px;width:1px;height:16px;background:#a9c1e2"></div>
<div class="a" style="left:1059.5px;top:721.5px;width:1px;height:16px;background:#a9c1e2"></div>
<div class="a" style="left:1077.5px;top:721.5px;width:1px;height:16px;background:#a9c1e2"></div>
<svg class="a" style="left:1000px;top:718px" width="280" height="22" viewBox="1000 718 280 22">
<rect x="1009.5" y="724.5" width="10" height="10" fill="#fff" stroke="#333" stroke-width="1.1"/>
<path d="M1011.5,726.5 H1017.5 M1011.5,728.5 H1017.5 M1011.5,730.5 H1017.5 M1011.5,732.5 H1017.5" stroke="#555" stroke-width="0.9"/>
<path d="M1027.5,724.5 H1032.5 L1033,725.5 L1033.5,724.5 H1038.5 V734.5 H1033.5 L1033,735.5 L1032.5,734.5 H1027.5 Z" fill="#fff" stroke="#444" stroke-width="1"/>
<path d="M1029,726.5 H1031.5 M1029,728.5 H1031.5 M1029,730.5 H1031.5 M1029,732.5 H1031.5 M1034.5,726.5 H1037 M1034.5,728.5 H1037 M1034.5,730.5 H1037 M1034.5,732.5 H1037" stroke="#666" stroke-width="0.8"/>
<rect x="1044.5" y="724.5" width="10" height="9" fill="#fff" stroke="#444" stroke-width="1"/>
<path d="M1046.5,726.5 H1052.5 M1046.5,728.5 H1051.5 M1046.5,730.5 H1050" stroke="#666" stroke-width="0.8"/>
<circle cx="1053.5" cy="733" r="3.2" fill="#2d8fd4" stroke="#1b4f8c" stroke-width="0.6"/>
<path d="M1052,731.5 L1054,732 L1053,734.5" stroke="#3aa23a" stroke-width="1.2" fill="none"/>
<path d="M1064,725.5 H1073 M1066.5,728 H1073 M1066.5,730.5 H1073 M1064,733 H1073" stroke="#555" stroke-width="1" stroke-dasharray="1.2,0.6"/>
<path d="M1082,725.5 H1092 M1082,727.5 H1092 M1082,729.5 H1092 M1082,731.5 H1092 M1082,733.5 H1092" stroke="#555" stroke-width="0.9"/>
<circle cx="1148.5" cy="729" r="7" fill="url(#zg)" stroke="#36578c" stroke-width="1"/>
<rect x="1144.5" y="728" width="8" height="2.2" fill="#2f3c55"/>
<path d="M1157,729.5 H1259" stroke="#fff" stroke-width="1.2"/>
<path d="M1157,728.5 H1259" stroke="#8aa8d2" stroke-width="0.8"/>
<path d="M1205,723.5 H1213.5 V731.5 L1209.25,735.5 L1205,731.5 Z" fill="url(#zg)" stroke="#4a6490" stroke-width="1"/>
<path d="M1209.25,726 V731" stroke="#6a7fa0" stroke-width="0.8"/>
<circle cx="1266.5" cy="729" r="7" fill="url(#zg)" stroke="#36578c" stroke-width="1"/>
<rect x="1262.5" y="728" width="8" height="2.2" fill="#2f3c55"/>
<rect x="1265.4" y="725" width="2.2" height="8" fill="#2f3c55"/>
<defs><linearGradient id="zg" x1="0" y1="0" x2="0" y2="1"><stop offset="0" stop-color="#ffffff"/><stop offset="0.5" stop-color="#dfe8f4"/><stop offset="1" stop-color="#f6f9fd"/></linearGradient></defs>
</svg>
<div class="rt" style="left:1104px;top:723.5px;font-size:11.3px;color:#22306c">120%</div>

<div class="a" style="left:0;top:740px;width:1280px;height:28px;background:#c0c0c0"></div>
<div class="a" style="left:0;top:741px;width:1280px;height:1px;background:#fff"></div>
<!-- start button -->
<div class="a" style="left:2px;top:744px;width:52px;height:22px;background:#c0c0c0;border-top:1px solid #fff;border-left:1px solid #fff;border-right:1px solid #000;border-bottom:1px solid #000;box-shadow:inset -1px -1px 0 #808080"></div>
<svg class="a" style="left:4px;top:746px" width="18" height="18" viewBox="0 0 18 18">
<path d="M2,4 C4,2.5 6,2.5 8,3.5 L7,8 C5,7 3.5,7 1.5,8 Z" fill="#f15a24"/>
<path d="M9,3.8 C11,5 13,5 15.5,3.8 L14.5,8.3 C12,9.3 10.5,9.3 8,8.2 Z" fill="#7cbb00"/>
<path d="M1.3,9 C3.3,8 5,8 7,9 L6,13.5 C4,12.5 2.5,12.5 0.5,13.5 Z" fill="#00a1f1"/>
<path d="M8,9.3 C10,10.3 12,10.3 14.5,9.3 L13.5,13.8 C11,14.8 9.5,14.8 7,13.8 Z" fill="#ffbb00"/>
</svg>
<div class="rt" style="left:22.5px;top:749.5px;font-size:12px;font-weight:bold;color:#000">Start</div>
<!-- task button (pressed) -->
<div class="a" style="left:59px;top:744px;width:160px;height:22px;border-top:1px solid #000;border-left:1px solid #000;border-right:1px solid #fff;border-bottom:1px solid #fff;box-shadow:inset 1px 1px 0 #808080;background-color:#e0e0e0;background-image:linear-gradient(45deg,#c0c0c0 25%,transparent 25%,transparent 75%,#c0c0c0 75%),linear-gradient(45deg,#c0c0c0 25%,transparent 25%,transparent 75%,#c0c0c0 75%);background-size:2px 2px;background-position:0 0,1px 1px"></div>
<svg class="a" style="left:63px;top:747px" width="18" height="18" viewBox="0 0 18 18">
<path d="M4.5,1.5 H12 L15.5,5 V16.5 H4.5 Z" fill="#f4f7fc" stroke="#5a6f9a" stroke-width="0.9"/>
<path d="M6.5,9 H13.5 M6.5,11 H13.5 M6.5,13 H13.5" stroke="#9aaac8" stroke-width="0.8"/>
<rect x="1.5" y="3.5" width="10" height="7.5" fill="#2f5fb8" stroke="#1c3f88" stroke-width="0.7"/>
<text x="2.3" y="9.8" font-family="Liberation Sans" font-weight="bold" font-size="7" fill="#fff">W</text>
</svg>
<div class="rt" style="left:84px;top:749.7px;font-size:11.8px;font-weight:bold;color:#000">Bidirectional power fl...</div>
<!-- quick links -->
<div class="rt" style="left:811.5px;top:749.5px;font-size:11px;color:#000">My Documents</div>
<svg class="a" style="left:888px;top:747px" width="18" height="16" viewBox="0 0 18 16">
<path d="M1.5,3.5 H6.5 L8,5 H15.5 V14.5 H1.5 Z" fill="#e8c455" stroke="#9a7a20" stroke-width="0.8"/>
<path d="M1.5,7 H15.5 V14.5 H1.5 Z" fill="#f8dc7a" stroke="#9a7a20" stroke-width="0.8"/>
</svg>
<div class="rt" style="left:908px;top:749.5px;font-size:11px;color:#000">Bluetooth</div>
<svg class="a" style="left:1000px;top:748px" width="10" height="7" viewBox="0 0 10 7"><path d="M1,1 L3.5,3.5 L1,6 M5,1 L7.5,3.5 L5,6" fill="none" stroke="#000" stroke-width="1.6"/></svg>
<div class="rt" style="left:1015px;top:749.5px;font-size:11px;color:#000">Desktop</div>
<svg class="a" style="left:1061px;top:748px" width="10" height="7" viewBox="0 0 10 7"><path d="M1,1 L3.5,3.5 L1,6 M5,1 L7.5,3.5 L5,6" fill="none" stroke="#000" stroke-width="1.6"/></svg>
<!-- tray -->
<div class="a" style="left:1072px;top:744px;width:206px;height:22px;border-top:1px solid #808080;border-left:1px solid #808080;border-right:1px solid #fff;border-bottom:1px solid #fff"></div>
<svg class="a" style="left:1073px;top:745px" width="145" height="20" viewBox="1073 745 145 20">
<ellipse cx="1083" cy="755" rx="5.5" ry="8" fill="#1c5fc6"/>
<path d="M1081,750 L1085.5,753.5 L1081.5,756.5 L1085.5,759.5 L1081,763 M1081.5,749.5 V762" stroke="#f22" stroke-width="1.3" fill="none"/>
<path d="M1094,763 V760 H1097 V763 Z M1097.5,763 V757 H1100.5 V763 Z M1101,763 V754 H1104 V763 Z M1104.5,763 V750 H1108 V763 Z" fill="#ff0" stroke="#000" stroke-width="0.8"/>
<rect x="1111.5" y="753.5" width="8" height="6" fill="#6a7ab0" stroke="#223" stroke-width="0.8"/>
<rect x="1112.5" y="760" width="6" height="3" fill="#ccd"/>
<path d="M1121,750 A3,3 0 0 1 1121,755 M1123,748.5 A5,5 0 0 1 1123,756.5 M1125,747 A7,7 0 0 1 1125,758" stroke="#3c3" stroke-width="1.1" fill="none"/>
<rect x="1132.5" y="748.5" width="8" height="6" fill="#6a7ab0" stroke="#223" stroke-width="0.8"/>
<rect x="1129.5" y="753.5" width="8" height="6" fill="#6a7ab0" stroke="#223" stroke-width="0.8"/>
<path d="M1137,757 L1143,763 M1143,757 L1137,763" stroke="#e22" stroke-width="2"/>
<rect x="1147" y="746.5" width="16" height="16" fill="#e81010"/>
<path d="M1148,752 H1162 M1148,755 H1162 M1148,758 H1162" stroke="#1a3ad0" stroke-width="1.2"/>
<circle cx="1155" cy="752.5" r="3.5" fill="#fff" stroke="#fff" stroke-width="1.2"/>
<path d="M1157.5,755 L1161,759" stroke="#fff" stroke-width="2"/>
<rect x="1165.5" y="748.5" width="14" height="13" rx="3" fill="#f3eaf3" stroke="#9a78a8" stroke-width="1"/>
<text x="1168" y="759.5" font-family="Liberation Serif" font-style="italic" font-size="11" fill="#7b5b94">N</text>
<rect x="1183" y="747" width="16" height="15" fill="#108a7a"/>
<path d="M1185,756 L1190,752 L1196,750 M1186,758 L1192,754 L1197,753" stroke="#fff" stroke-width="1.1" fill="none"/>
<rect x="1185" y="754" width="4" height="3" fill="#ff0"/>
<rect x="1205.5" y="748.5" width="8" height="14" rx="1" fill="#1a2ad0" stroke="#111" stroke-width="1"/>
<rect x="1207.5" y="747" width="4" height="2" fill="#111"/>
<path d="M1209.5,752 V759" stroke="#e22" stroke-width="1.4"/>
<path d="M1206,750.5 H1213" stroke="#7cf" stroke-width="1"/>
</svg>
<div class="rt" style="left:1226px;top:749.5px;font-size:11px;color:#000">8:00 AM</div>

</body></html>
